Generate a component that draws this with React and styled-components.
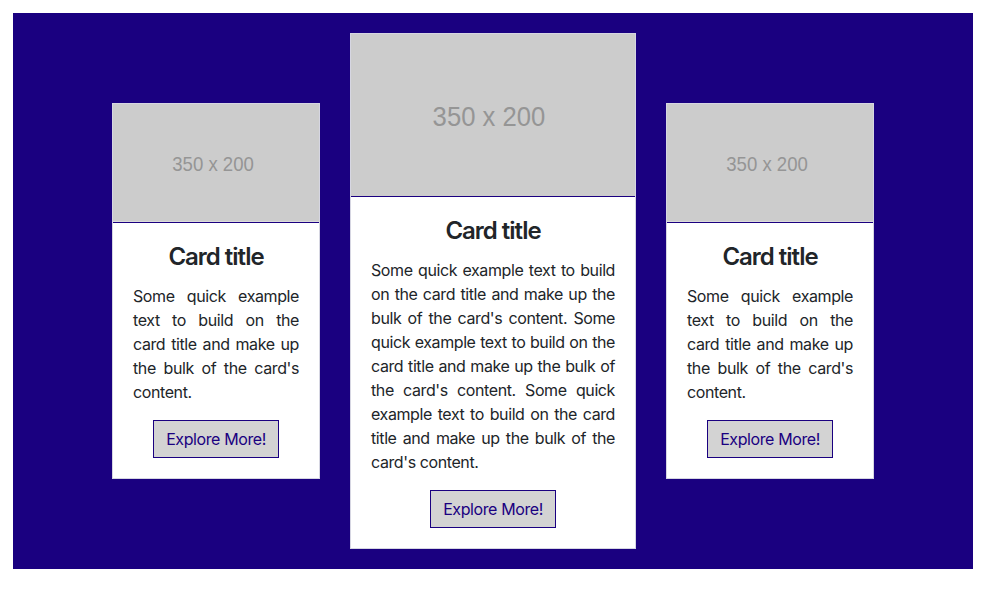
import React from 'react';
import styled, { createGlobalStyle } from 'styled-components';

const GlobalStyle = createGlobalStyle`
  body {
    margin: 0;
    background: #fff;
    font-family: Inter, "Liberation Sans", sans-serif;
    color: #212529;
  }
`;

const Page = styled.div`
  padding: 13px 18px 22px 13px;
`;

const Stage = styled.section`
  height: 556px;
  background: #1a0080;
  display: flex;
  align-items: center;
  justify-content: center;
  gap: 30px;
`;

const Card = styled.div`
  width: ${(p) => p.$width}px;
  box-sizing: border-box;
  background: #fff;
  border: 1px solid #d6d6e2;
  display: flex;
  flex-direction: column;
`;

const Thumb = styled.svg`
  display: block;
  width: 100%;
  height: auto;
  border-bottom: 1px solid #1a0080;
`;

const Body = styled.div`
  padding: 20px 20px 20px;
  display: flex;
  flex-direction: column;
  align-items: center;
`;

const Title = styled.h5`
  margin: 0 0 12px;
  font-size: 24px;
  line-height: 1.2;
  font-weight: 600;
  letter-spacing: -1px;
  color: #212529;
`;

const Text = styled.p`
  margin: 0 0 16px;
  align-self: stretch;
  font-size: 16px;
  line-height: 24px;
  letter-spacing: -0.4px;
  text-align: justify;
  color: #212529;
`;

const Button = styled.button`
  font-family: inherit;
  font-size: 16px;
  line-height: 24px;
  letter-spacing: -0.4px;
  padding: 6px 12px;
  background: #d3d3d3;
  color: #1a0080;
  border: 1px solid #1a0080;
  border-radius: 0;
  cursor: pointer;
`;

const blurb =
  "Some quick example text to build on the card title and make up the bulk of the card's content.";

function Placeholder() {
  return (
    <Thumb viewBox="0 0 350 200" preserveAspectRatio="none">
      <rect width="350" height="200" fill="#cccccc" />
      <text
        x="170"
        y="102"
        dy="0.35em"
        textAnchor="middle"
        fontFamily="Liberation Sans, Arial, sans-serif"
        fontSize="34"
        fill="#959595"
        transform="translate(170 102) scale(0.93 1) translate(-170 -102)"
      >
        350 x 200
      </text>
    </Thumb>
  );
}

function InfoCard({ width, text }) {
  return (
    <Card $width={width}>
      <Placeholder />
      <Body>
        <Title>Card title</Title>
        <Text>{text}</Text>
        <Button>Explore More!</Button>
      </Body>
    </Card>
  );
}

export default function App() {
  return (
    <>
      <GlobalStyle />
      <Page>
        <Stage>
          <InfoCard width={208} text={blurb} />
          <InfoCard width={286} text={`${blurb} ${blurb} ${blurb}`} />
          <InfoCard width={208} text={blurb} />
        </Stage>
      </Page>
    </>
  );
}
